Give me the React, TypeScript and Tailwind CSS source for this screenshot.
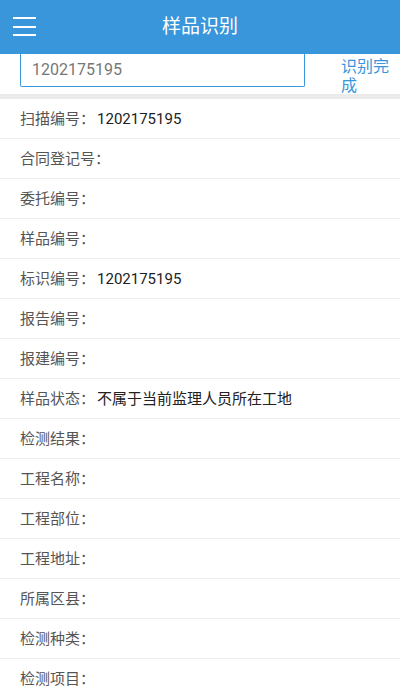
import React from "react";

const rows: [string, string][] = [
  ["扫描编号：", "1202175195"],
  ["合同登记号：", ""],
  ["委托编号：", ""],
  ["样品编号：", ""],
  ["标识编号：", "1202175195"],
  ["报告编号：", ""],
  ["报建编号：", ""],
  ["样品状态：", "不属于当前监理人员所在工地"],
  ["检测结果：", ""],
  ["工程名称：", ""],
  ["工程部位：", ""],
  ["工程地址：", ""],
  ["所属区县：", ""],
  ["检测种类：", ""],
  ["检测项目：", ""],
];

const App = () => {
  return (
    <div
      className="w-[400px] h-[689px] overflow-hidden bg-white"
      style={{ fontFamily: "Roboto, 'Noto Sans CJK SC', sans-serif" }}
    >
      {/* header */}
      <div className="h-[54px] bg-[#3996db] flex items-center relative">
        <div className="absolute left-[13px] top-[17px] flex flex-col gap-[6.5px]">
          <div className="w-[23px] h-[2px] bg-white" />
          <div className="w-[23px] h-[2px] bg-white" />
          <div className="w-[23px] h-[2px] bg-white" />
        </div>
        <div className="flex-1 text-center text-white text-[19px]">样品识别</div>
      </div>

      {/* search */}
      <div className="h-[40px] flex items-start">
        <div className="ml-[20px] w-[285px] h-[33px] border-x border-b border-[#3996db] rounded-b-[2px] flex items-center pl-[11px] text-[16px] text-[#777]">
          1202175195
        </div>
        <div className="ml-[36px] w-[56px] text-[16px] leading-[19px] text-[#3996db] pt-[3px]">
          识别完成
        </div>
      </div>
      <div className="h-[5px] bg-[#ebebeb]" />

      {/* rows */}
      <div className="flex flex-col">
        {rows.map(([label, value], i) => (
          <div
            key={i}
            className="h-[40px] shrink-0 flex items-center pl-[20px] pt-[2px] border-b border-[#eeeeee] text-[15px]"
          >
            <span className="text-[#555]">{label}</span>
            <span className="text-[#222] ml-[2px]">{value}</span>
          </div>
        ))}
      </div>
    </div>
  );
};

export default App;
